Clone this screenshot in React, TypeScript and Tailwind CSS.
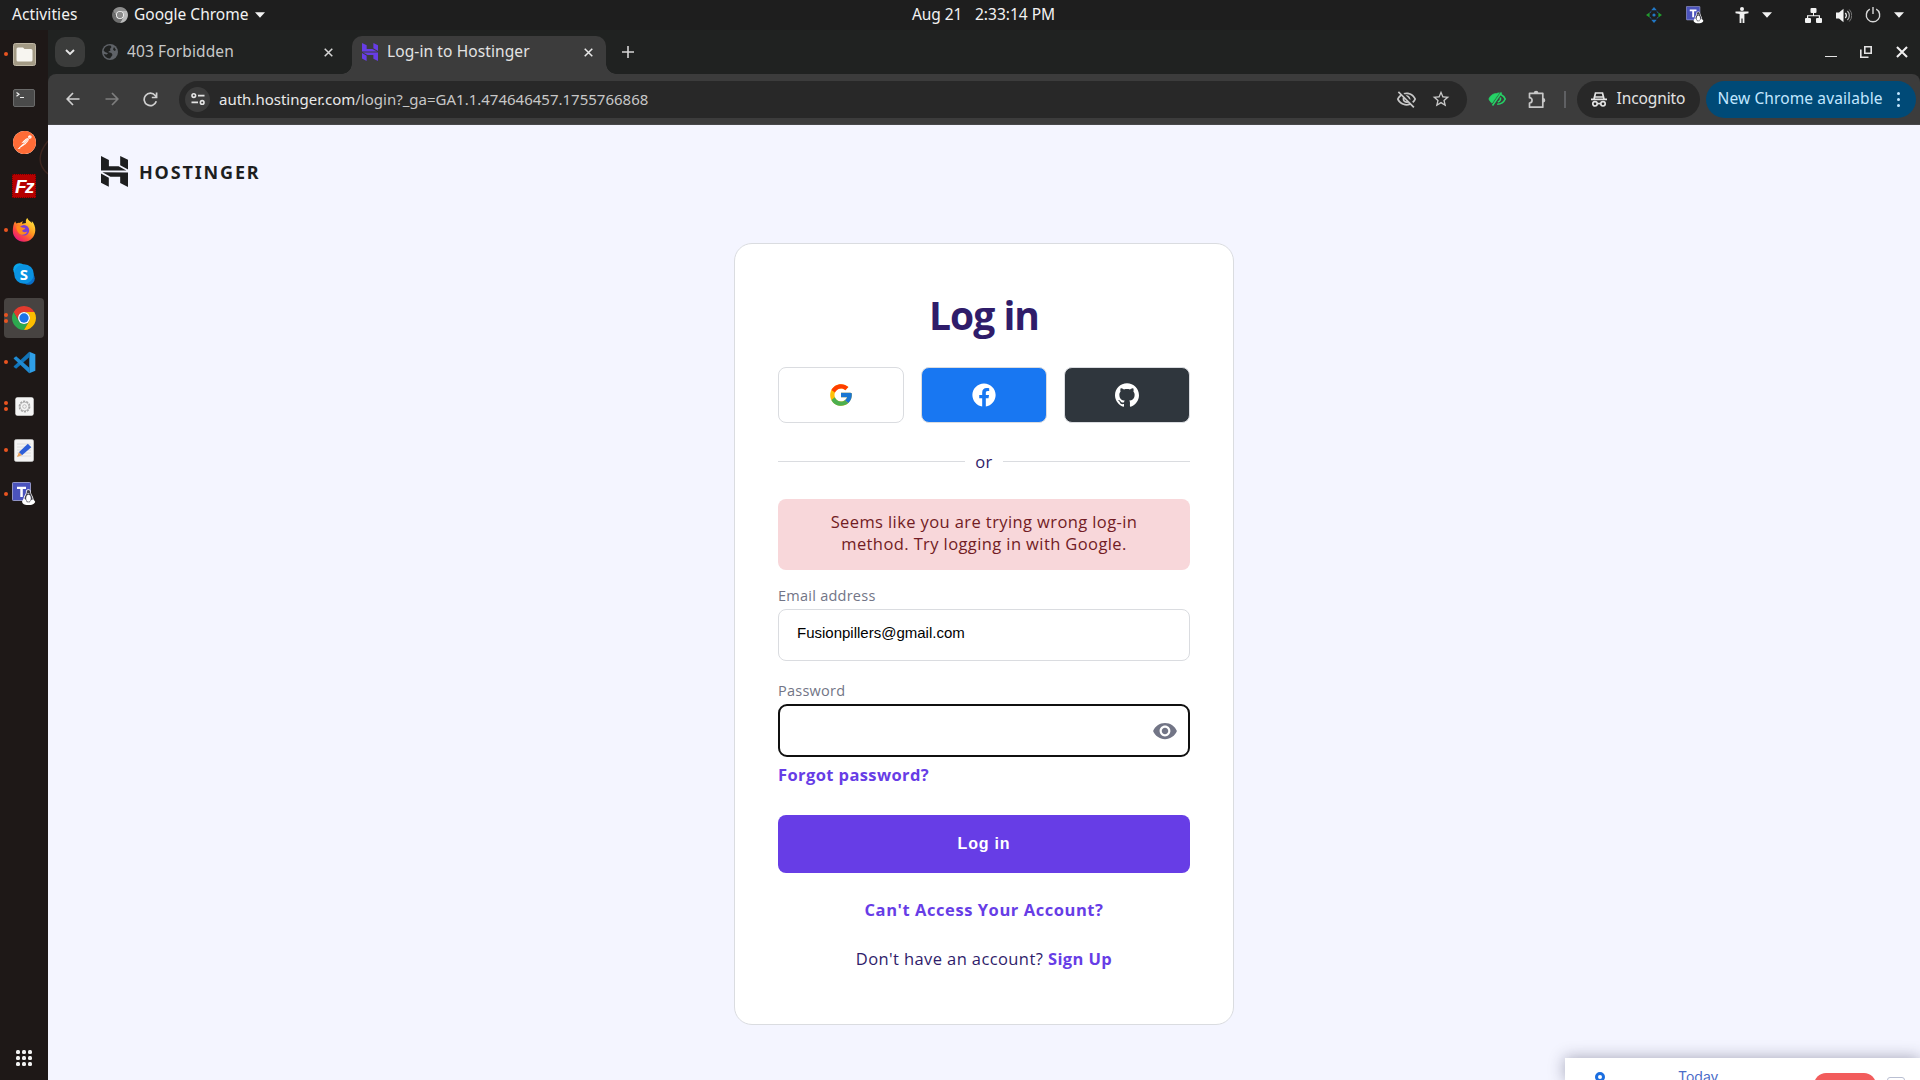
import type { ReactNode } from "react";
import { FcGoogle } from "react-icons/fc";
import { FaFacebook } from "react-icons/fa";
import { SiGithub, SiPostman } from "react-icons/si";
import { MdVisibility, MdStarBorder, MdOutlineVisibilityOff } from "react-icons/md";

const UI = "font-['Noto_Sans',sans-serif]";
const BODY = "font-['Open_Sans',sans-serif]";

function HostingerMark({ className }: { className: string }) {
  return (
    <svg viewBox="2.2 0 20 24" preserveAspectRatio="none" className={className} fill="currentColor">
      <path d="M16.415 0v7.16l5.785 3.384V2.949L16.415 0ZM2.2 0v11.237h18.815L15.23 7.852l-7.184.003V3.023L2.2 0Zm14.214 20.894v-4.878l-7.24-.005-5.88-3.384 18.906.09V24l-5.786-3.106ZM2.2 13.456v7.332l5.785 3.107v-6.967L2.2 13.456Z" />
    </svg>
  );
}

function ChromeIcon({ size, gray }: { size: number; gray?: boolean }) {
  const c = gray ? ["#8d8d8d", "#6e6e6e", "#b9b9b9", "#8a8a8a"] : ["#e33b2e", "#2da94f", "#fdbd00", "#1a73e8"];
  return (
    <svg width={size} height={size} viewBox="0 0 24 24">
      <path fill={c[0]} d="M12 6h10.39A12 12 0 0 0 1.61 6l5.196 9A6 6 0 0 1 12 6z" />
      <path fill={c[1]} d="M6.8 15 1.61 6A12 12 0 0 0 12 24l5.196-9A6 6 0 0 1 6.8 15z" />
      <path fill={c[2]} d="M17.196 15 12 24A12 12 0 0 0 22.39 6H12a6 6 0 0 1 5.196 9z" />
      <circle cx="12" cy="12" r="6" fill="#fff" />
      <circle cx="12" cy="12" r="4.7" fill={c[3]} />
    </svg>
  );
}

function TeamsPenguin({ size }: { size: number }) {
  return (
    <svg width={size} height={size} viewBox="0 0 24 24">
      <rect x="0.5" y="0.5" width="18" height="18" rx="0.8" fill="#4b53bc" stroke="#a9adde" strokeWidth="0.8" />
      <path d="M5 4.8h9v2.3h-3.2v8H8.3v-8H5z" fill="#fff" />
      <path d="M16.3 7.2c-1.9 0-2.6 1.5-2.4 3.6-.2 1.6-2 3-2.3 5.4l-1.6 3.6c.4 2.3 3 3 4.6 3.2h3.6c2.4-.2 4.6-1.3 5-3.2l-1.6-2.3c-.1-2.6-2.4-4.8-2.6-6.7 0-2-.8-3.6-2.7-3.6z" fill="#fff" />
      <path d="M16.3 8c-1.3 0-1.7 1.1-1.6 2.8-.1 1.8-1.9 3-2.2 5.8 1.1.7 1.7 2 2.4 3.7h3c.3-1.7 1.3-2.6 2.9-2.9-.2-3-2.2-4.6-2.4-6.4 0-1.9-.6-3-2.1-3z" fill="#43434f" />
      <ellipse cx="16.5" cy="16.2" rx="2.3" ry="3.5" fill="#fff" />
      <path d="M15 11.2h2.6l-1.3 1.3z" fill="#ddd" />
    </svg>
  );
}

function Caret() {
  return (
    <svg width="10" height="6" viewBox="0 0 10 6" fill="#f2f2f2">
      <path d="M0 .2h10L5 5.8z" />
    </svg>
  );
}

function Cell({ w, children }: { w: string; children: ReactNode }) {
  return <div className={`flex shrink-0 items-center justify-center ${w}`}>{children}</div>;
}

function TopBar() {
  return (
    <header className={`flex h-[30px] shrink-0 items-center bg-[#1e1e1e] text-[15.5px] leading-none text-[#f2f2f2] ${UI}`}>
      <div className="flex w-[912px] items-center pl-3">
        <span className="w-[100px] tracking-[0.1px]">Activities</span>
        <ChromeIcon size={16} gray />
        <span className="ml-1.5 w-[121px]">Google Chrome</span>
        <Caret />
      </div>
      <span className="w-[63px] tracking-[-0.1px]">Aug 21</span>
      <span>2:33:14 PM</span>
      <div className="ml-auto flex items-center pr-2.5">
        <Cell w="w-7">
          <svg width="16" height="16" viewBox="0 0 16 16">
            <path d="M8 0l2.8 3.2H5.2zM8 16l2.8-3.2H5.2z" fill="#2277c4" />
            <path d="M0 8l3.6-2.6v5.2zM16 8l-3.6-2.6v5.2z" fill="#239a2e" />
            <path d="M5 4.4A5 5 0 0 0 4 6M11 4.4A5 5 0 0 1 12 6M5 11.6A5 5 0 0 1 4 10M11 11.6a5 5 0 0 0 1-1.6" stroke="#1e62a8" strokeWidth="1" fill="none" />
            <circle cx="8" cy="8" r="1.6" fill="#2277c4" />
          </svg>
        </Cell>
        <Cell w="w-[54px]"><TeamsPenguin size={18} /></Cell>
        <Cell w="w-10">
          <svg width="14" height="16" viewBox="0 0 14 16" fill="#f2f2f2">
            <circle cx="7" cy="2" r="2" />
            <path d="M.5 4.6h13v1.6L9.4 7v9H7.6v-4.6H6.400V16H4.600V7L.5 6.200z" />
          </svg>
        </Cell>
        <Cell w="w-2.5"><Caret /></Cell>
        <div className="ml-7 flex items-center">
          <Cell w="w-[26px]">
            <svg width="17" height="15" viewBox="0 0 17 15" fill="#f2f2f2">
              <rect x="5.500" y="0" width="6" height="5" rx="1" />
              <rect x="0" y="10" width="6" height="5" rx="1" />
              <rect x="11" y="10" width="6" height="5" rx="1" />
              <path d="M8 5h1v2.200h6V10h-1.200V8.300H3.200V10H2V7.200h6z" />
            </svg>
          </Cell>
        </div>
        <div className="ml-1 flex items-center">
          <Cell w="w-7">
            <svg width="16" height="15" viewBox="0 0 16 15" fill="#f2f2f2">
              <path d="M0 4.500h3L7.500 0.800v13.400L3 10.500H0z" />
              <path d="M9.300 5a3.500 3.500 0 0 1 0 5" stroke="#f2f2f2" strokeWidth="1.300" fill="none" />
              <path d="M11.400 3a6.200 6.200 0 0 1 0 9" stroke="#bbb" strokeWidth="1.200" fill="none" />
              <path d="M13.300 1.500a8.600 8.600 0 0 1 0 12" stroke="#777" strokeWidth="1" fill="none" />
            </svg>
          </Cell>
          <Cell w="w-[30px]">
            <svg width="16" height="16" viewBox="0 0 16 16" fill="none" stroke="#d8d8d8" strokeWidth="1.400">
              <path d="M4.800 2.200a6.700 6.700 0 1 0 6.400 0M8 0v7" />
            </svg>
          </Cell>
          <Cell w="w-[22px]"><Caret /></Cell>
        </div>
      </div>
    </header>
  );
}

function FilesIcon() {
  return (
    <svg width="23" height="23" viewBox="0 0 23 23">
      <rect x="0.500" y="0.500" width="22" height="22" rx="2" fill="#a39a85" stroke="#bfb7a5" />
      <path d="M3.500 6a1.500 1.500 0 0 1 1.500-1.500h5L11.500 6H18a1.500 1.500 0 0 1 1.500 1.500V17A1.500 1.500 0 0 1 18 18.500H5A1.500 1.500 0 0 1 3.500 17z" fill="#f7f5f0" />
    </svg>
  );
}

function TerminalIcon() {
  return (
    <svg width="22" height="18" viewBox="0 0 22 18">
      <rect x="0.500" y="0.500" width="21" height="17" rx="1.500" fill="#4a4a4a" stroke="#6a6a6a" />
      <path d="M3.500 3.500 6 5.300 3.500 7.200M7 8.500h4" fill="none" stroke="#eee" strokeWidth="1.200" />
    </svg>
  );
}

function FirefoxIcon() {
  return (
    <svg width="24" height="24" viewBox="0 0 24 24">
      <defs>
        <linearGradient id="ffBody" x1="0.85" y1="0.1" x2="0.2" y2="0.95">
          <stop offset="0" stopColor="#ffe23d" />
          <stop offset="0.4" stopColor="#ff9a1f" />
          <stop offset="0.7" stopColor="#ff4a3d" />
          <stop offset="1" stopColor="#e3157f" />
        </linearGradient>
      </defs>
      <path d="M3.200 3.200c.2 1 .7 1.800 1.300 2.300C5.600 4.800 7 4.700 8 5c.8-1 1.900-1.500 3-1.500-.8.900-1 1.600-1 2.300l4-.8c-.5-1.700 0-3.800 1.300-5 .7 2.200 3 3.200 4.600 5 .1-.7 0-1.400-.2-2C22 5 23.500 9 23.300 12.500 23 19 18 23.800 12 23.800S.8 19 .8 13c0-3.500.6-7.300 2.400-9.800z" fill="url(#ffBody)" />
      <circle cx="12" cy="12.300" r="5.200" fill="#7a3fd6" />
      <path d="M4.500 8.200c2-.6 4 .2 5.500 1.300 1.500.3 3 .1 3.300.8-.3 1.200-2.600 1.200-3 2.300-.2 1.500 2.400 2.400 5 .9-1.200 3.500-6.300 4.400-8.600 1.500C5 13 4 10.200 4.500 8.200z" fill="#ff8a1c" />
    </svg>
  );
}

function SkypeIcon() {
  return (
    <div className="relative flex h-[22px] w-[22px] items-center justify-center">
      <svg width="22" height="22" viewBox="0 0 22 22" className="absolute inset-0">
        <circle cx="6.500" cy="6.500" r="6.300" fill="#0aa5ea" />
        <circle cx="15.500" cy="15.500" r="6.300" fill="#0a6fc9" />
        <circle cx="11" cy="11" r="9.800" fill="#0a93e2" />
      </svg>
      <span className="relative font-['Open_Sans',sans-serif] text-[15px] leading-none font-bold text-white">S</span>
    </div>
  );
}

function CodeIcon() {
  return (
    <svg width="23" height="23" viewBox="0 0 24 24">
      <path d="M17 .8 23.300 3.500v17L17 23.200z" fill="#2f9fe8" />
      <path d="M17 .8v5.600L3.300 18.500.8 16.600V16z" fill="#1173b8" />
      <path d="M17 23.200v-5.600L3.300 5.500.8 7.400V8z" fill="#1f8ad2" />
    </svg>
  );
}

function GearIcon() {
  return (
    <svg width="19" height="19" viewBox="0 0 19 19">
      <rect x="0.300" y="0.300" width="18.400" height="18.400" rx="2.200" fill="#f4f4f4" />
      <circle cx="9.500" cy="9.500" r="5.200" fill="none" stroke="#a5a5a5" strokeWidth="1.400" strokeDasharray="2.200 1" />
      <circle cx="9.500" cy="9.500" r="4.300" fill="none" stroke="#a8a8a8" strokeWidth="0.800" />
      <circle cx="9.500" cy="9.500" r="1.800" fill="none" stroke="#b5b5b5" strokeWidth="0.900" />
    </svg>
  );
}

function EditorIcon() {
  return (
    <svg width="20" height="23" viewBox="0 0 20 23">
      <rect x="0.400" y="0.400" width="19.200" height="22.200" rx="2" fill="#f3f3f3" stroke="#cfcfcf" strokeWidth="0.600" />
      <path d="M3 5h14M3 8h14M3 11h14M3 14h14M3 17h14" stroke="#d6d6d6" strokeWidth="0.800" />
      <path d="M13.800 4.800 17.300 8.300 8 16.300 4.900 13.200z" fill="#2d5fd8" />
      <path d="M4.900 13.200 8 16.300 3 18z" fill="#e8a15c" />
    </svg>
  );
}

const DOCK: { name: string; dots: number; active?: boolean; icon: ReactNode }[] = [
  { name: "files", dots: 1, icon: <FilesIcon /> },
  { name: "terminal", dots: 0, icon: <TerminalIcon /> },
  { name: "postman", dots: 0, icon: <div className="rounded-full bg-white"><SiPostman size={23} color="#ff6c37" /></div> },
  {
    name: "filezilla",
    dots: 0,
    icon: (
      <div className="flex h-6 w-6 items-center justify-center border border-dotted border-[#6d0000] bg-[#b50000] font-['Liberation_Sans',sans-serif] text-[19px] leading-none font-bold tracking-[-1.5px] text-white italic">
        Fz
      </div>
    ),
  },
  { name: "firefox", dots: 1, icon: <FirefoxIcon /> },
  { name: "skype", dots: 0, icon: <SkypeIcon /> },
  { name: "chrome", dots: 2, active: true, icon: <ChromeIcon size={24} /> },
  { name: "code", dots: 1, icon: <CodeIcon /> },
  { name: "settings", dots: 2, icon: <GearIcon /> },
  { name: "editor", dots: 1, icon: <EditorIcon /> },
  { name: "teams", dots: 1, icon: <TeamsPenguin size={24} /> },
];

function Dock() {
  return (
    <nav className="relative flex w-12 shrink-0 flex-col items-center bg-[#1e1817] pt-0.5">
      <svg className="absolute top-[110px] right-0" width="9" height="36" viewBox="0 0 9 36" fill="none">
        <path d="M9 1C-1 13-2 25 9 34" stroke="#3d2620" strokeWidth="1.500" />
      </svg>
      {DOCK.map((d) => (
        <div key={d.name} className="flex h-11 w-full items-center justify-center">
          <div className={`relative flex h-10 w-10 items-center justify-center rounded ${d.active ? "bg-[#474341]" : ""}`}>
            <div className="absolute inset-y-0 left-0 flex flex-col justify-center gap-[1.5px]">
              {Array.from({ length: d.dots }, (_, i) => (
                <i key={i} className="block h-1 w-1 rounded-full bg-[#e95420]" />
              ))}
            </div>
            {d.icon}
          </div>
        </div>
      ))}
      <div className="mt-auto mb-[14px] grid grid-cols-3 gap-0.5">
        {Array.from({ length: 9 }, (_, i) => (
          <i key={i} className="block h-1 w-1 rounded-[1.5px] bg-[#f2f2f2]" />
        ))}
      </div>
    </nav>
  );
}

function CloseX({ size = 9 }: { size?: number }) {
  return (
    <svg width={size} height={size} viewBox="0 0 10 10" fill="none" stroke="currentColor" strokeWidth="1.700">
      <path d="M.8.8l8.400 8.400M9.200.8.8 9.200" />
    </svg>
  );
}

function TabStrip() {
  return (
    <div className={`flex h-11 shrink-0 items-center bg-[#202221] pl-[7px] text-[15.5px] leading-none ${UI}`}>
      <div className="flex h-[30px] w-[30px] items-center justify-center rounded-[10px] bg-[#3b3c3b]">
        <svg width="10" height="7" viewBox="0 0 10 7" fill="none" stroke="#e6e6e6" strokeWidth="1.900">
          <path d="M1 1l4 4 4-4" />
        </svg>
      </div>
      <div className="flex w-[267px] items-center pr-[17px] pl-[17px] text-[#c7c8c8]">
        <svg width="16" height="16" viewBox="0 0 16 16">
          <circle cx="8" cy="8" r="8" fill="#5f6368" />
          <path d="M3 3.500C4.500 2 6.500 1.400 8.500 1.600L9.500 3 8 5l.5 1.500L6 8l3.500 1 1 2-2.500 3.500C5 14.500 2.500 12.500 1.800 10l3 .5L6 9.200 3 8 1.600 6.500C1.900 5.300 2.400 4.300 3 3.500zM12 3l2 3-1.500 1L11 5.500z" fill="#202221" />
        </svg>
        <span className="ml-[9px] tracking-[0.12px]">403 Forbidden</span>
        <span className="ml-auto flex w-3.5 justify-center text-[#d5d5d5]"><CloseX /></span>
      </div>
      <div className="relative flex h-[38px] w-[254px] items-center self-end rounded-t-[10px] bg-[#3c3c3c] pr-[11px] pb-1.5 pl-2.5 text-[#e3e3e3]">
        <i className="absolute bottom-0 -left-2.5 h-2.5 w-2.5 bg-[radial-gradient(circle_at_0_0,transparent_9.5px,#3c3c3c_10px)]" />
        <i className="absolute -right-2.5 bottom-0 h-2.5 w-2.5 bg-[radial-gradient(circle_at_100%_0,transparent_9.5px,#3c3c3c_10px)]" />
        <HostingerMark className="h-[18px] w-4 text-[#673de6]" />
        <span className="ml-[9px] tracking-[0.1px]">Log-in to Hostinger</span>
        <span className="ml-auto flex w-3.5 justify-center text-[#e8e8e8]"><CloseX /></span>
      </div>
      <svg className="ml-4" width="12" height="12" viewBox="0 0 12 12" stroke="#d5d5d5" strokeWidth="1.600">
        <path d="M6 0v12M0 6h12" />
      </svg>
      <div className="ml-auto flex h-full items-center pr-3">
        <i className="mt-[9px] block h-[1.500px] w-3 bg-[#e4e4e4]" />
        <svg className="ml-[23px]" width="12" height="12" viewBox="0 0 12 12" fill="none" stroke="#e4e4e4" strokeWidth="1.600">
          <path d="M4.800.8h6.400v6.400H4.800zM.8 3.500v7.700h7.700" />
        </svg>
        <span className="ml-[24px] text-[#f0f0f0]">
          <CloseX size={12} />
        </span>
      </div>
    </div>
  );
}

function Toolbar() {
  return (
    <div className="shrink-0 bg-[#202221]">
      <div className={`flex h-[51px] items-center rounded-t-lg border-b border-[#48484a] bg-[#3c3c3c] pl-[5px] text-[15.5px] leading-none ${UI}`}>
        <Cell w="w-[39px]">
          <svg width="14" height="14" viewBox="0 0 14 14" fill="none" stroke="#d0d0d0" strokeWidth="1.700">
            <path d="M13.500 7H1.500M7 1 1.200 7 7 13" />
          </svg>
        </Cell>
        <Cell w="w-[39px]">
          <svg width="14" height="14" viewBox="0 0 14 14" fill="none" stroke="#7e7e7e" strokeWidth="1.700">
            <path d="M.5 7h12M7 1l5.800 6L7 13" />
          </svg>
        </Cell>
        <Cell w="w-[39px]">
          <svg width="15" height="15" viewBox="0 0 15 15" fill="none" stroke="#d0d0d0" strokeWidth="1.700">
            <path d="M13.300 9.300A6.200 6.200 0 1 1 12.200 3.500l1.300 1.500M13.600.5v5H8.800" />
          </svg>
        </Cell>
        <div className="ml-[9px] flex h-[37px] w-[1288px] items-center rounded-full bg-[#282828] pr-[8.5px] pl-1.5">
          <div className="flex h-[25px] w-[25px] items-center justify-center rounded-full bg-[#3c3c3c]">
            <svg width="14" height="12" viewBox="0 0 14 12" fill="none" stroke="#e3e3e3" strokeWidth="1.600">
              <circle cx="2.800" cy="2.600" r="1.800" />
              <path d="M7 2.600h6.500M.5 9.400H7" />
              <circle cx="11.200" cy="9.400" r="1.800" />
            </svg>
          </div>
          <span className="ml-[9px] text-[15px] text-[#c7c7c7]">
            <span className="text-[#e8e8e8]">auth.hostinger.com</span>/login?_ga=GA1.1.474646457.1755766868
          </span>
          <div className="ml-auto flex">
            <Cell w="w-[35px]"><MdOutlineVisibilityOff size={21} color="#c7c7c7" /></Cell>
            <Cell w="w-[35px]"><MdStarBorder size={20} color="#c7c7c7" /></Cell>
          </div>
        </div>
        <div className="ml-2.5 flex items-center">
          <Cell w="w-10">
            <svg width="18" height="14" viewBox="0 0 18 14" fill="none" stroke="#25d366" strokeWidth="1.600">
              <path d="M8.500 1.500C4.500 1.500 2 4 .8 7c.7 1.800 1.800 3.200 3.200 4.200L11.500.8C10.600.9 9.500 1 8.500 1.500z" fill="#25d366" strokeWidth="0.600" />
              <path d="M12.800 2.500C14.800 3.400 16.400 5 17.200 7c-1.400 3.300-4.300 5.200-8 5.200M13.500.5 4.500 13.500M12.300 5.500c.6 2-.4 4-2.500 4.500" />
            </svg>
          </Cell>
          <Cell w="w-10">
            <svg width="18" height="19" viewBox="0 0 18 19" fill="none" stroke="#c7c7c7" strokeWidth="1.700">
              <path d="M1.500 3.300h13.300v13.900H1.500V13c3.400 0 3.400-5.300 0-5.300z" strokeLinejoin="round" />
              <path d="M5.800 3a2.300 2.300 0 0 1 4.600 0zM15 7.900a2.300 2.300 0 0 1 0 4.600z" fill="#c7c7c7" stroke="none" />
            </svg>
          </Cell>
        </div>
        <i className="ml-[7px] block h-[17px] w-[1.500px] bg-[#5f6063]" />
        <div className="ml-[11px] flex h-[37px] w-[123px] items-center rounded-full bg-[#282828] pl-3.5 text-[#e3e3e3]">
          <svg width="16" height="15" viewBox="0 0 16 15" fill="none" stroke="#e3e3e3" strokeWidth="1.700">
            <path d="M0 7.400h16M3 7 4.500 1h7L13 7M4 5h8" />
            <circle cx="4" cy="11.800" r="2.200" />
            <circle cx="12" cy="11.800" r="2.200" />
            <path d="M6.300 11.600h3.400" />
          </svg>
          <span className="ml-2.5 tracking-[-0.1px]">Incognito</span>
        </div>
        <div className="ml-1.5 flex h-[37px] w-[210px] items-center rounded-full bg-[#004a77] pl-3 text-[#c2e7ff]">
          <span className="whitespace-nowrap tracking-[0.12px]">New Chrome available</span>
          <div className="ml-auto mr-4 flex flex-col gap-[3px]">
            <i className="block h-[3px] w-[3px] rounded-full bg-[#c2e7ff]" />
            <i className="block h-[3px] w-[3px] rounded-full bg-[#c2e7ff]" />
            <i className="block h-[3px] w-[3px] rounded-full bg-[#c2e7ff]" />
          </div>
        </div>
      </div>
    </div>
  );
}

function LoginCard() {
  return (
    <section className={`mt-[56px] flex h-[782px] w-[500px] flex-col self-center rounded-[18px] border border-[#dadce0] bg-white px-[43px] pt-[43px] text-[16.5px] tracking-[0.4px] text-[#2f1c6a] ${BODY}`}>
      <h1 className="text-center text-[39px] leading-[56px] font-bold tracking-[-1px]">Log in</h1>
      <div className="mt-6 grid grid-cols-3 gap-[17px]">
        <button className="flex h-14 items-center justify-center rounded-lg border border-[#dadce0] bg-white"><FcGoogle size={26} /></button>
        <button className="flex h-14 items-center justify-center rounded-lg border border-[#dadce0] bg-[#1877f2]"><FaFacebook size={24} color="#fff" /></button>
        <button className="flex h-14 items-center justify-center rounded-lg border border-[#dadce0] bg-[#2f363d]"><SiGithub size={24} color="#fff" /></button>
      </div>
      <div className="mt-7 flex h-[21px] items-center">
        <i className="h-px flex-1 bg-[#dadce0]" />
        <span className="w-[38px] text-center leading-[21px]">or</span>
        <i className="h-px flex-1 bg-[#dadce0]" />
      </div>
      <div className="mt-[27px] h-[71px] rounded-lg bg-[#f8d7da] pt-3 text-center leading-[22px] text-[#721c24]">
        Seems like you are trying wrong log-in
        <br />
        method. Try logging in with Google.
      </div>
      <label className="mt-4 text-[14.5px] leading-5 tracking-[0.25px] text-[#727586]">Email address</label>
      <div className="mt-[3px] flex h-[52px] items-center rounded-lg border border-[#dadce0] pb-1 pl-[18px] font-['Liberation_Sans',sans-serif] text-[15px] leading-5 tracking-normal text-black">
        Fusionpillers@gmail.com
      </div>
      <label className="mt-5 text-[14.5px] leading-5 tracking-[0.25px] text-[#727586]">Password</label>
      <div className="mt-[3px] flex h-[53px] items-center justify-end rounded-[9px] border-2 border-[#101010] pr-2.5">
        <MdVisibility size={26} color="#727586" />
      </div>
      <a className="mt-[7px] leading-[22px] font-bold text-[#673de6]">Forgot password?</a>
      <button className="mt-[29px] h-[58px] rounded-lg bg-[#673de6] font-['Liberation_Sans',sans-serif] text-base font-bold tracking-[0.8px] text-white">
        Log in
      </button>
      <a className="mt-[26px] text-center leading-[22px] font-bold tracking-[0.56px] text-[#673de6]">Can't Access Your Account?</a>
      <p className="mt-[27px] text-center leading-[22px]">
        Don't have an account? <a className="font-bold text-[#673de6]">Sign Up</a>
      </p>
    </section>
  );
}

function ReminderPopup() {
  return (
    <aside className="absolute right-0 bottom-0 flex h-[22px] w-[355px] items-start overflow-visible bg-white shadow-[0_0_16px_rgba(40,40,70,0.4)]">
      <div className="flex h-[22px] w-full items-start overflow-hidden">
        <svg className="mt-[14px] ml-[30px] shrink-0" width="10" height="14" viewBox="0 0 10 14" fill="none">
          <circle cx="5" cy="5" r="3.500" stroke="#1b6ee0" strokeWidth="3" />
        </svg>
        <span className="mt-[11px] ml-[73px] w-[136px] font-['Inter',sans-serif] text-[14px] leading-[16px] text-[#4a6bc8]">Today</span>
        <i className="mt-[14.5px] block h-6 w-[62px] shrink-0 rounded-full bg-[#f25c5c]" />
        <i className="mt-[19px] ml-[11px] block h-[18px] w-[18px] shrink-0 rounded-[3px] border-[1.500px] border-[#b9bfd2]" />
      </div>
    </aside>
  );
}

export default function App() {
  return (
    <div className="relative flex h-[1080px] w-[1920px] flex-col overflow-hidden bg-[#1e1e1e]">
      <TopBar />
      <div className="flex min-h-0 flex-1">
        <Dock />
        <div className="flex min-w-0 flex-1 flex-col">
          <TabStrip />
          <Toolbar />
          <main className="relative flex min-h-0 flex-1 flex-col overflow-hidden bg-[#f4f5ff]">
            <div className="mt-[31px] ml-[53px] flex h-[31px] items-center text-[#1d1e20]">
              <HostingerMark className="h-[31px] w-[27px]" />
              <span className="ml-[11px] font-['Noto_Sans',sans-serif] text-[18px] leading-none font-bold tracking-[1.85px]">HOSTINGER</span>
            </div>
            <LoginCard />
            <ReminderPopup />
          </main>
        </div>
      </div>
    </div>
  );
}
